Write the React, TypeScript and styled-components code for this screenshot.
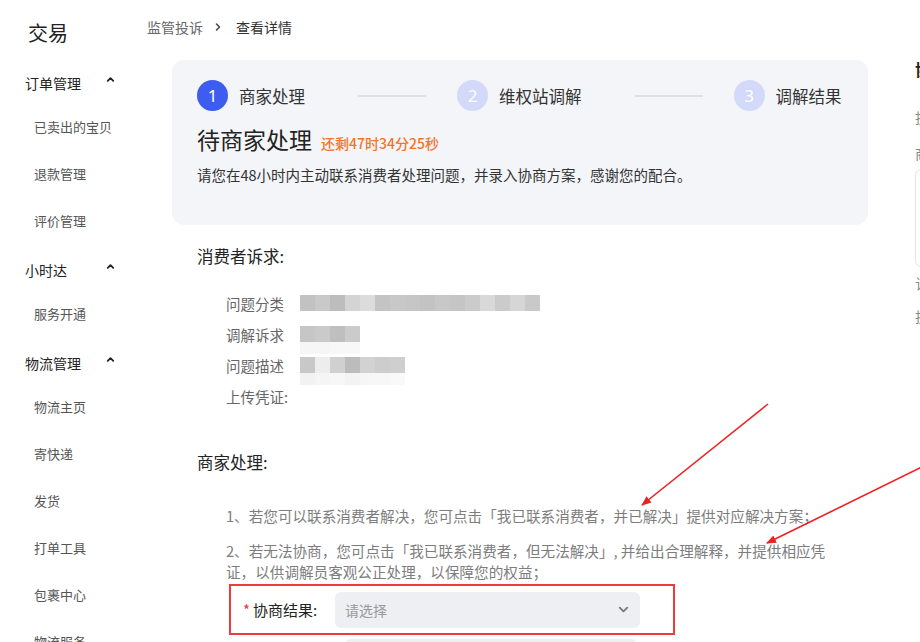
import React from "react";
import styled, { createGlobalStyle } from "styled-components";
import { ChevronUp, ChevronRight, ChevronDown } from "lucide-react";

const GlobalStyle = createGlobalStyle`
  html, body {
    margin: 0;
    padding: 0;
    background: #fff;
    overflow: hidden;
  }
  body {
    font-family: "Noto Sans CJK SC", "Noto Sans", sans-serif;
    color: #222;
  }
`;

const Page = styled.div`
  position: relative;
  display: flex;
  align-items: flex-start;
  width: 920px;
  height: 642px;
  overflow: hidden;
`;

const Sidebar = styled.aside`
  flex: 0 0 147px;
  padding-top: 13px;
`;

const Logo = styled.div`
  height: 40px;
  line-height: 40px;
  padding-left: 28px;
  font-size: 20px;
  color: #222;
  margin-bottom: 9px;
`;

const Group = styled.div`
  margin-bottom: 5px;
`;

const GroupHead = styled.div`
  height: 41px;
  display: flex;
  align-items: center;
  padding-left: 25px;
  font-size: 14px;
  color: #222;
  svg {
    margin-left: auto;
    margin-right: 31px;
    margin-top: -6px;
  }
`;

const SubItem = styled.div`
  height: 47px;
  line-height: 47px;
  padding-left: 34px;
  font-size: 13px;
  color: #555;
`;

const Main = styled.main`
  flex: 0 0 721px;
`;

const Crumbs = styled.div`
  height: 20px;
  margin-top: 17px;
  display: flex;
  align-items: center;
  font-size: 14px;
  color: #666;
  svg {
    margin: 0 12px 0 9px;
    color: #444;
  }
`;

const Current = styled.span`
  color: #333;
`;

const Card = styled.section`
  margin: 23px 0 0 25px;
  width: 696px;
  height: 165px;
  box-sizing: border-box;
  padding: 20px 25px 0;
  background: #f4f5f8;
  border-radius: 12px;
`;

const Steps = styled.div`
  display: flex;
  align-items: center;
  height: 31px;
`;

const Step = styled.div`
  display: flex;
  align-items: center;
  gap: 11px;
  font-size: 16.5px;
  color: #333;
`;

const Circle = styled.span<{ $active?: boolean }>`
  width: 31px;
  height: 31px;
  border-radius: 50%;
  display: flex;
  align-items: center;
  justify-content: center;
  font-family: "Noto Sans", sans-serif;
  font-size: 17px;
  color: #fff;
  background: ${(p) => (p.$active ? "#3d5cf0" : "#d3d9f8")};
`;

const StepLine = styled.span`
  width: 68px;
  height: 2px;
  background: #dfe0e5;
  margin: 0 31px 0 53px;
`;

const TitleRow = styled.div`
  margin-top: 12px;
  display: flex;
  align-items: baseline;
  gap: 9px;
`;

const Title = styled.h1`
  margin: 0;
  font-size: 23px;
  font-weight: 400;
  color: #222;
  line-height: 32px;
`;

const Countdown = styled.span`
  font-size: 14px;
  color: #f5732b;
  font-weight: 500;
`;

const Desc = styled.p`
  margin: 10px 0 0;
  font-size: 14.5px;
  color: #333;
  line-height: 20px;
`;

const Section = styled.section<{ $top: number }>`
  margin: ${(p) => p.$top}px 0 0 50px;
`;

const SectionTitle = styled.h2`
  margin: 0;
  font-size: 16.5px;
  font-weight: 400;
  color: #222;
  line-height: 24px;
`;

const InfoList = styled.div`
  margin: 20px 0 0 29px;
  display: flex;
  flex-direction: column;
`;

const InfoRow = styled.div`
  height: 31px;
  display: flex;
  align-items: center;
  font-size: 14.5px;
  color: #666;
`;

const InfoLabel = styled.span`
  width: 74px;
`;

const Mosaic = styled.div<{ $cols: number }>`
  display: grid;
  grid-template-columns: repeat(${(p) => p.$cols}, 15px);
  grid-auto-rows: 16px 12px;
  align-self: flex-start;
  margin-top: 7px;
`;

const Cell = styled.span<{ $c: string }>`
  background: ${(p) => p.$c};
`;

const Notes = styled.div`
  margin: 31px 0 0 29px;
  width: 612px;
  font-size: 14.6px;
  line-height: 21px;
  color: #7d7d7d;
`;

const Note = styled.p`
  margin: 0 0 14px;
  &:last-child {
    margin-bottom: 0;
  }
`;

const ResultBox = styled.div`
  margin: 2px 0 0 82px;
  width: 446px;
  height: 51px;
  box-sizing: border-box;
  border: 2px solid #ee3b3b;
  display: flex;
  align-items: center;
  padding-left: 12px;
`;

const FieldLabel = styled.label`
  width: 92px;
  font-size: 15px;
  color: #222;
  span {
    color: #e33;
    margin-right: 3px;
  }
`;

const Select = styled.div<{ $w: number }>`
  width: ${(p) => p.$w}px;
  height: 36px;
  box-sizing: border-box;
  border-radius: 6px;
  background: #eeeff3;
  display: flex;
  align-items: center;
  padding: 0 9px 0 10px;
  font-size: 14px;
  color: #999;
  svg {
    margin-left: auto;
    color: #7a7a7a;
  }
`;

const NextSelect = styled.div`
  margin: 4px 0 0 198px;
  width: 292px;
  height: 30px;
  border-radius: 6px;
  background: #eeeff3;
`;

const RightPanel = styled.aside`
  flex: 0 0 200px;
  margin-left: 47px;
  padding-top: 57px;
  font-size: 14px;
  color: #888;
`;

const RightTitle = styled.div`
  font-size: 16px;
  font-weight: 600;
  color: #222;
  line-height: 24px;
  margin-bottom: 18px;
`;

const RightLine = styled.div<{ $h: number }>`
  line-height: ${(p) => p.$h}px;
`;

const RightBox = styled.div`
  margin: -2px 0 0;
  height: 96px;
  border: 1px solid #e6e6e6;
  border-radius: 6px;
`;

const Overlay = styled.svg`
  position: absolute;
  inset: 0;
  pointer-events: none;
`;

const row1 = ["#c2c2c2", "#c9c9c9", "#bdbdbd", "#d4d4d4", "#dcdcdc", "#c4c4c4", "#c8c8c8", "#c6c6c6", "#c3c3c3", "#c8c8c8", "#c5c5c5", "#cbcbcb", "#d9d9d9", "#cbcbcb", "#d6d6d6", "#c9c9c9"];
const row1b = row1.map(() => "transparent");
const row2 = ["#c6c6c6", "#cacaca", "#bfbfbf", "#cbcbcb"];
const row2b = ["#f6f6f6", "#f6f6f6", "#f8f8f8", "#f8f8f8"];
const row3 = ["#c8c8c8", "#ededed", "#d0d0d0", "#bcbcbc", "#d2d2d2", "#cdcdcd", "#cfcfcf"];
const row3b = ["#f2f2f2", "#f5f5f5", "#f7f7f7", "#f3f3f3", "#f6f6f6", "#f7f7f7", "#f9f9f9"];

const Blur = ({ top, bottom }: { top: string[]; bottom: string[] }) => (
  <Mosaic $cols={top.length}>
    {top.concat(bottom).map((c, i) => (
      <Cell key={i} $c={c} />
    ))}
  </Mosaic>
);

const groups = [
  { title: "订单管理", items: ["已卖出的宝贝", "退款管理", "评价管理"] },
  { title: "小时达", items: ["服务开通"] },
  { title: "物流管理", items: ["物流主页", "寄快递", "发货", "打单工具", "包裹中心", "物流服务"] },
];

export default function App() {
  return (
    <>
      <GlobalStyle />
      <Page>
        <Sidebar>
          <Logo>交易</Logo>
          {groups.map((g) => (
            <Group key={g.title}>
              <GroupHead>
                {g.title}
                <ChevronUp size={11} strokeWidth={4} />
              </GroupHead>
              {g.items.map((it) => (
                <SubItem key={it}>{it}</SubItem>
              ))}
            </Group>
          ))}
        </Sidebar>

        <Main>
          <Crumbs>
            监管投诉
            <ChevronRight size={12} strokeWidth={3} />
            <Current>查看详情</Current>
          </Crumbs>

          <Card>
            <Steps>
              <Step>
                <Circle $active>1</Circle>商家处理
              </Step>
              <StepLine />
              <Step>
                <Circle>2</Circle>维权站调解
              </Step>
              <StepLine />
              <Step>
                <Circle>3</Circle>调解结果
              </Step>
            </Steps>
            <TitleRow>
              <Title>待商家处理</Title>
              <Countdown>还剩47时34分25秒</Countdown>
            </TitleRow>
            <Desc>请您在48小时内主动联系消费者处理问题，并录入协商方案，感谢您的配合。</Desc>
          </Card>

          <Section $top={19}>
            <SectionTitle>消费者诉求:</SectionTitle>
            <InfoList>
              <InfoRow>
                <InfoLabel>问题分类</InfoLabel>
                <Blur top={row1} bottom={row1b} />
              </InfoRow>
              <InfoRow>
                <InfoLabel>调解诉求</InfoLabel>
                <Blur top={row2} bottom={row2b} />
              </InfoRow>
              <InfoRow>
                <InfoLabel>问题描述</InfoLabel>
                <Blur top={row3} bottom={row3b} />
              </InfoRow>
              <InfoRow>
                <InfoLabel>上传凭证:</InfoLabel>
              </InfoRow>
            </InfoList>
          </Section>

          <Section $top={38}>
            <SectionTitle>商家处理:</SectionTitle>
            <Notes>
              <Note>1、若您可以联系消费者解决，您可点击「我已联系消费者，并已解决」提供对应解决方案；</Note>
              <Note>
                2、若无法协商，您可点击「我已联系消费者，但无法解决」, 并给出合理解释，并提供相应凭证，以供调解员客观公正处理，以保障您的权益；
              </Note>
            </Notes>
          </Section>
          <ResultBox>
            <FieldLabel>
              <span>*</span>协商结果:
            </FieldLabel>
            <Select $w={305}>
              请选择
              <ChevronDown size={15} strokeWidth={3} />
            </Select>
          </ResultBox>
          <NextSelect />
        </Main>

        <RightPanel>
          <RightTitle>协商记录</RightTitle>
          <RightLine $h={36}>投诉时间</RightLine>
          <RightLine $h={36}>商品信息</RightLine>
          <RightBox />
          <RightLine $h={33}>订单编号</RightLine>
          <RightLine $h={33}>投诉编号</RightLine>
        </RightPanel>

        <Overlay width="920" height="642" viewBox="0 0 920 642">
          <defs>
            <marker id="head" markerWidth="10" markerHeight="10" refX="9" refY="5" orient="auto" markerUnits="userSpaceOnUse">
              <path d="M0,1 L10,5 L0,9 z" fill="#f02020" />
            </marker>
          </defs>
          <line x1="768" y1="404" x2="642" y2="505" stroke="#f02020" strokeWidth="1.6" markerEnd="url(#head)" />
          <line x1="922" y1="467" x2="767" y2="543" stroke="#f02020" strokeWidth="1.6" markerEnd="url(#head)" />
        </Overlay>
      </Page>
    </>
  );
}
